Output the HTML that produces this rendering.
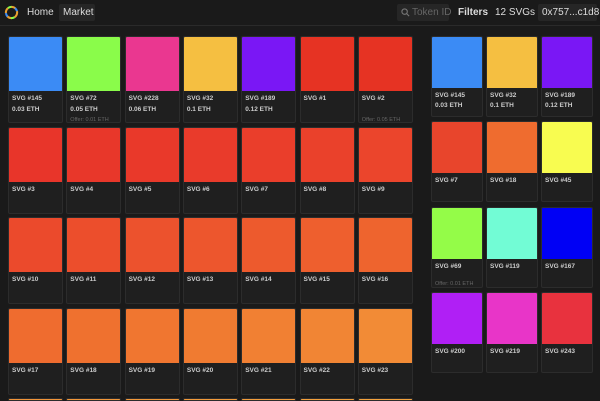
<!DOCTYPE html><html><head><style>
*{margin:0;padding:0;box-sizing:border-box}
html,body{width:600px;height:401px;overflow:hidden}
body{background:#1a1a1a;font-family:"Liberation Sans",sans-serif;color:#ddd;position:relative}
.hdr{position:absolute;left:0;top:0;width:600px;height:26px;border-bottom:1px solid #2a2a2a;font-size:10px}
.hdr span{position:absolute;top:7px;white-space:nowrap}
.c{position:absolute;background:#1f1f1f;border:1px solid #2c2c2c;border-radius:2px;overflow:hidden}
.c .sq{position:absolute;left:0;top:0;right:0}
.c .t{position:absolute;left:3px;font-size:6.5px;color:#ccc;font-weight:bold;white-space:nowrap}
.c .o{position:absolute;left:3px;font-size:5.5px;color:#666;white-space:nowrap}
</style></head><body>
<div class="hdr">
<svg style="position:absolute;left:4px;top:5px" width="15" height="15" viewBox="0 0 16 16"><circle cx="8" cy="8" r="6" fill="none" stroke="#e8a030" stroke-width="2.2" stroke-dasharray="6 3"/><circle cx="8" cy="8" r="6" fill="none" stroke="#3b8bf5" stroke-width="2.2" stroke-dasharray="4 14" stroke-dashoffset="4"/><circle cx="8" cy="8" r="6" fill="none" stroke="#8afc4a" stroke-width="2.2" stroke-dasharray="4 14" stroke-dashoffset="12"/></svg>
<span style="left:27px">Home</span>
<div style="position:absolute;left:59px;top:4px;width:36px;height:17px;background:#262626;border-radius:2px"></div>
<span style="left:63px">Market</span>
<div style="position:absolute;left:397px;top:4px;width:52px;height:17px;background:#262626;border-radius:2px"></div>
<svg style="position:absolute;left:401px;top:8px" width="9" height="9" viewBox="0 0 10 10"><circle cx="4" cy="4" r="3" fill="none" stroke="#777" stroke-width="1.2"/><path d="M6.3 6.3L9 9" stroke="#777" stroke-width="1.2"/></svg>
<span style="left:412px;color:#666">Token ID</span>
<span style="left:458px;font-weight:bold">Filters</span>
<span style="left:495px">12 SVGs</span>
<div style="position:absolute;left:538px;top:4px;width:59px;height:17px;background:#262626;border-radius:2px"></div>
<span style="left:542px">0x757...c1d8</span>
</div>
<div id="g"></div>
<script>
var L=[["#3b8bf5","#8afc4a","#ea3790","#f5bf41","#7a17f5","#e63323","#e63323"],
["#e8352a","#e8372a","#e9392a","#e93b2b","#ea3e2b","#ea412b","#eb452c"],
["#eb4a2c","#ec4e2c","#ec522d","#ed562d","#ed5a2d","#ee5f2e","#ee642e"],
["#ef6c2f","#ef712f","#f07630","#f07b31","#f18033","#f18534","#f28b36"],
["#f2953a","#f2973a","#f3993b","#f39b3b","#f39d3c","#f4a03c","#f4a23d"]];
var LT=["SVG #145","SVG #72","SVG #228","SVG #32","SVG #189","SVG #1","SVG #2"];
var LP=["0.03 ETH","0.05 ETH","0.06 ETH","0.1 ETH","0.12 ETH","",""];
var LO=["","Offer: 0.01 ETH","","","","","Offer: 0.05 ETH"];
var h="";
for(var r=0;r<5;r++)for(var i=0;i<7;i++){
var x=8+i*58.3,y=36+r*90.5,n=r*7+i+1;
var ht=Math.min(87,401-y);
var t=r==0?LT[i]:"SVG #"+(n-5);
h+='<div class="c" style="left:'+x+'px;top:'+y+'px;width:55px;height:'+ht+'px"><div class="sq" style="height:54px;background:'+L[r][i]+'"></div>';
if(r<4)h+='<div class="t" style="top:58px">'+t+'</div>';
if(r==0){if(LP[i])h+='<div class="t" style="top:69px">'+LP[i]+'</div>';if(LO[i])h+='<div class="o" style="top:80px">'+LO[i]+'</div>';}
h+='</div>';}
var R=[["#3b8bf5","#f5bf41","#7a17f5"],["#e8452c","#ef6c2f","#f8fc50"],["#94fc48","#72fcd5","#0000f5"],["#b01ff5","#e835c8","#e8323e"]];
var RT=[["SVG #145","SVG #32","SVG #189"],["SVG #7","SVG #18","SVG #45"],["SVG #69","SVG #119","SVG #167"],["SVG #200","SVG #219","SVG #243"]];
var RP=["0.03 ETH","0.1 ETH","0.12 ETH"];
for(var r=0;r<4;r++)for(var i=0;i<3;i++){
var x=431+i*55,y=36+r*85.3;
h+='<div class="c" style="left:'+x+'px;top:'+y+'px;width:52px;height:81px"><div class="sq" style="height:51px;background:'+R[r][i]+'"></div><div class="t" style="top:55px">'+RT[r][i]+'</div>';
if(r==0)h+='<div class="t" style="top:65px">'+RP[i]+'</div>';
if(r==2&&i==0)h+='<div class="o" style="top:73px">Offer: 0.01 ETH</div>';
h+='</div>';}
document.getElementById("g").innerHTML=h;
</script>
</body></html>
